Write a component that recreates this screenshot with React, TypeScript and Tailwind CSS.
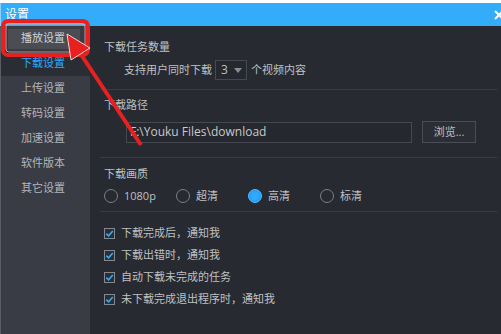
import React from "react";

const font = "font-['Open_Sans','Noto_Sans_CJK_SC',sans-serif]";

function Divider() {
  return <div className="h-px bg-[#3a3d45]" />;
}

function Radio({ label, checked }: { label: string; checked?: boolean }) {
  return (
    <div className="flex w-[72px] items-center gap-[6px]">
      {checked ? (
        <span className="flex h-[14px] w-[14px] items-center justify-center rounded-full border border-[#4fb6ff] bg-[#27a2f2]">
          <span className="h-[8px] w-[8px] rounded-full bg-[#2fa9ff]" />
        </span>
      ) : (
        <span className="h-[14px] w-[14px] rounded-full border border-[#7d8087]" />
      )}
      <span>{label}</span>
    </div>
  );
}

function Check({ label }: { label: string }) {
  return (
    <div className="flex h-[22px] items-center gap-[6px]">
      <span className="flex h-[11px] w-[11px] items-center justify-center border border-[#85888f] bg-[#2b2e35]">
        <svg width="9" height="9" viewBox="0 0 9 9">
          <path d="M1.3 4.6 L3.6 6.8 L7.8 2" fill="none" stroke="#3aa9f2" strokeWidth="1.6" />
        </svg>
      </span>
      <span>{label}</span>
    </div>
  );
}

export default function App() {
  const side = ["上传设置", "转码设置", "加速设置", "软件版本", "其它设置"];
  return (
    <div className={`relative h-[334px] w-[501px] overflow-hidden bg-white pt-[3px] ${font} text-[11px] text-[#bfc0c3]`}>
      <div className="flex h-[23px] items-center justify-between bg-[#33adf9] pl-[4px] border-l border-[#8fd0fa]">
        <span className="text-[12px] text-white">设置</span>
        <svg width="10" height="10" viewBox="0 0 10 10" className="mr-[-3px]">
          <path d="M1 1 L9 9 M9 1 L1 9" stroke="white" strokeWidth="2" />
        </svg>
      </div>
      <div className="flex h-[308px]">
        <div className="w-[90px] border-l border-[#5a5d64] bg-[#393c44]">
          <div className="flex h-[25px] items-center pl-[7px]">
            <div className="flex h-[20px] w-[72px] items-center bg-[#4b4d53] pl-[13px] text-[#cfd0d2]">播放设置</div>
          </div>
          <div className="flex h-[25px] items-center bg-[#2a2d34] pl-[20px] text-[#2ea7ff]">下载设置</div>
          {side.map((s) => (
            <div key={s} className="flex h-[25px] items-center pl-[20px] text-[#b4b5b8]">
              {s}
            </div>
          ))}
        </div>
        <div className="flex-1 bg-[#272a31] pl-[10px] pr-[4px]">
          <div className="mt-[13px] flex h-[16px] items-center pl-[4px]">下载任务数量</div>
          <div className="mt-[5px] flex h-[20px] items-center pl-[24px]">
            <span>支持用户同时下载</span>
            <div className="ml-[3px] flex h-[20px] w-[32px] items-center justify-between border border-[#464951] bg-[#25282e] pl-[5px] pr-[4px] text-[12px]">
              <span>3</span>
              <svg width="8" height="5" viewBox="0 0 8 5">
                <path d="M0 0 L8 0 L4 5 Z" fill="#8a8d93" />
              </svg>
            </div>
            <span className="ml-[4px]">个视频内容</span>
          </div>
          <div className="mt-[9px]">
            <Divider />
          </div>
          <div className="mt-[7px] flex h-[16px] items-center pl-[4px]">下载路径</div>
          <div className="mt-[8px] flex items-center pl-[26px]">
            <div className="flex h-[21px] w-[286px] items-center border border-[#464951] bg-[#25282e] pl-[3px] text-[12px] text-[#c8c9cb]">
              F:\Youku Files\download
            </div>
            <div className="ml-[10px] flex h-[22px] w-[54px] items-center justify-center border border-[#4a4d55] bg-[#2b2e35] text-[11px]">
              浏览...
            </div>
          </div>
          <div className="mt-[14px]">
            <Divider />
          </div>
          <div className="mt-[8px] flex h-[16px] items-center pl-[4px]">下载画质</div>
          <div className="mt-[6px] flex h-[16px] items-center pl-[4px] text-[11px]">
            <Radio label="1080p" />
            <Radio label="超清" />
            <Radio label="高清" checked />
            <Radio label="标清" />
          </div>
          <div className="mt-[7px]">
            <Divider />
          </div>
          <div className="mt-[10px] pl-[4px]">
            <Check label="下载完成后，通知我" />
            <Check label="下载出错时，通知我" />
            <Check label="自动下载未完成的任务" />
            <Check label="未下载完成退出程序时，通知我" />
          </div>
        </div>
      </div>
      <svg className="pointer-events-none absolute left-0 top-0" width="501" height="334" viewBox="0 0 501 334">
        <rect x="3" y="21" width="85" height="34" rx="5" fill="none" stroke="#e8201f" strokeWidth="4" />
        <rect x="6" y="24" width="79" height="28" rx="3" fill="none" stroke="#f3b0b0" strokeWidth="0.8" />
        <line x1="141" y1="145" x2="80" y2="53" stroke="#e8201f" strokeWidth="4" />
        <polygon points="67,34 90,48 71,60" fill="#e8201f" stroke="#ffffff" strokeWidth="0.8" />
      </svg>
    </div>
  );
}
